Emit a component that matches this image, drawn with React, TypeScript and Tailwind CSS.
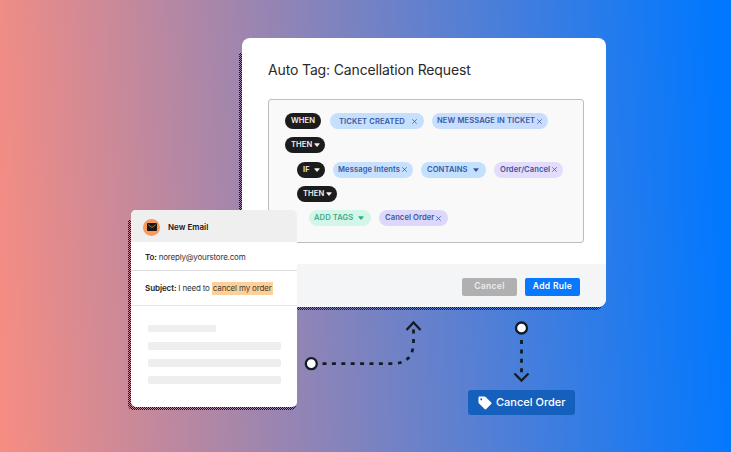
import React from "react";

type PillProps = {
  children: React.ReactNode;
  className: string;
  mark?: "x" | "caret";
  markClass?: string;
};

function Caret({ className = "" }: { className?: string }) {
  return (
    <svg viewBox="0 0 8 5" className={`h-[4px] w-[6px] shrink-0 ${className}`} fill="currentColor">
      <path d="M1 .3h6q.8 0 .4.7L4.6 4.5q-.6.6-1.2 0L.6 1Q.2.3 1 .3Z" />
    </svg>
  );
}

function Cross({ className = "" }: { className?: string }) {
  return (
    <svg viewBox="0 0 5 5" className={`size-[5px] shrink-0 ${className}`} stroke="currentColor" strokeWidth="0.8">
      <path d="M.3.3l4.4 4.4M4.7.3L.3 4.7" />
    </svg>
  );
}

function Pill({ children, className, mark, markClass }: PillProps) {
  return (
    <div className={`flex h-4 shrink-0 items-center rounded-full whitespace-nowrap ${className}`}>
      <span>{children}</span>
      {mark === "x" && <Cross className={markClass} />}
      {mark === "caret" && <Caret className={markClass} />}
    </div>
  );
}

function RuleCard() {
  return (
    <section className="absolute top-[38px] left-[242px] h-[269px] w-[364px]">
      <div className="absolute top-[15px] right-[3px] -bottom-[3px] -left-[3px] rounded-b-lg bg-[repeating-conic-gradient(#16161c_0_25%,transparent_0_50%)] bg-[length:2px_2px]" />
      <div className="relative flex h-full flex-col overflow-hidden rounded-lg bg-white">
        <h1 className="pt-[21px] pl-[26px] text-[14px] leading-[21px] tracking-[-0.14px] text-[#2a2a2a]">Auto Tag: Cancellation Request</h1>
        <div className="mt-[19px] ml-[26px] flex h-[144px] w-[316px] flex-col gap-[8.3px] rounded-[3px] border border-[#bdbdbd] bg-[#f9f9f9] pt-[13px] pl-4 text-[7.6px] leading-4 font-semibold tracking-[0.09px] text-[#3b589f]">
          <div className="flex">
            <Pill className="w-9 bg-[#1c1c1c] pl-[6px] text-[#f2f2f2]">WHEN</Pill>
            <Pill className="ml-[9px] w-[94px] bg-[#c5e0ff] pt-px pl-[9px]" mark="x" markClass="ml-[7px]">TICKET CREATED</Pill>
            <Pill className="ml-2 w-[116px] bg-[#c9deff] pl-[5px]" mark="x" markClass="ml-[2px]">NEW MESSAGE IN TICKET</Pill>
          </div>
          <div className="flex">
            <Pill className="w-10 bg-[#1c1c1c] pl-[6px] text-[#f2f2f2]" mark="caret" markClass="ml-[2px]">THEN</Pill>
          </div>
          <div className="flex pl-3">
            <Pill className="w-7 bg-[#1c1c1c] pl-[6px] text-[#f2f2f2]" mark="caret" markClass="ml-[4px]">IF</Pill>
            <Pill className="ml-2 w-[80px] bg-[#c6e0ff] pl-[5px]" mark="x" markClass="ml-[2px]">Message Intents</Pill>
            <Pill className="ml-2 w-[65px] bg-[#c3e0ff] pl-[6px]" mark="caret" markClass="ml-[5px]">CONTAINS</Pill>
            <Pill className="ml-2 w-[69px] bg-[#e3dcfd] pl-[6px]" mark="x" markClass="ml-[2px]">Order/Cancel</Pill>
          </div>
          <div className="flex pl-3">
            <Pill className="w-10 bg-[#1c1c1c] pl-[6px] text-[#f2f2f2]" mark="caret" markClass="ml-[2px]">THEN</Pill>
          </div>
          <div className="flex pl-6">
            <Pill className="w-[62px] bg-[#d4f6e8] pl-[5px] text-[#45ab88]" mark="caret" markClass="ml-[5px] text-[#1ab883]">ADD TAGS</Pill>
            <Pill className="ml-2 w-[69px] bg-[#ddd8fb] pl-[6px]" mark="x" markClass="ml-[2px]">Cancel Order</Pill>
          </div>
        </div>
        <footer className="mt-auto flex h-[43px] items-center justify-end gap-2 bg-[#f3f5f6] pt-[2px] pr-[26px] text-[8.5px] font-semibold tracking-[0.33px] text-white">
          <button className="h-[18px] w-[55px] rounded-[2px] bg-[#b0b0b0] text-[#ececec]">Cancel</button>
          <button className="h-[18px] w-[55px] rounded-[2px] bg-[#0878ff]">Add Rule</button>
        </footer>
      </div>
    </section>
  );
}

function EmailCard() {
  return (
    <section className="absolute top-[210px] left-[131px] h-[197px] w-[166px]">
      <div className="absolute top-[10px] right-[1px] -bottom-[3px] -left-[3px] rounded-b-[5px] bg-[repeating-conic-gradient(#16161c_0_25%,transparent_0_50%)] bg-[length:2px_2px]" />
      <div className="relative flex h-full flex-col overflow-hidden rounded-[5px] bg-white text-[8px] text-[#333]">
        <header className="flex h-8 shrink-0 items-center bg-[#efefef] pt-[2px] pl-3">
          <span className="flex size-[17px] items-center justify-center rounded-full bg-[#f9995b]">
            <svg viewBox="0 0 10 8" className="h-[8px] w-[10px]">
              <rect width="10" height="8" rx="1" fill="#171717" />
              <path d="M1.3 1.8 5 4.5l3.7-2.7" fill="none" stroke="#f9995b" strokeWidth=".7" />
            </svg>
          </span>
          <h2 className="pl-2 font-semibold text-[#151515]">New Email</h2>
        </header>
        <p className="flex h-[29px] shrink-0 items-center border-b border-[#dedede] pt-[2px] pl-[14px] tracking-[-0.19px] whitespace-pre"><b className="font-semibold tracking-[-0.1px] text-[#222]">To: </b>noreply@yourstore.com</p>
        <p className="flex h-[35px] shrink-0 items-center border-b border-[#e8e8e8] pl-[14px] tracking-[-0.17px] whitespace-pre"><b className="font-semibold tracking-[-0.07px] text-[#222]">Subject: </b>I need to <mark className="h-[13px] w-[61px] bg-[#fdd09a] px-px leading-[13px] text-[#493a2c]">cancel my order</mark></p>
        <div className="flex flex-col gap-[9px] pt-[19px] pl-[17px]">
          <div className="h-[7px] w-[68px] rounded-[2px] bg-[#eee]" />
          <div className="mt-px h-2 w-[133px] rounded-[2px] bg-[#eee]" />
          <div className="h-2 w-[133px] rounded-[2px] bg-[#eee]" />
          <div className="h-2 w-[133px] rounded-[2px] bg-[#eee]" />
        </div>
      </div>
    </section>
  );
}

export default function App() {
  return (
    <main className="relative h-[452px] w-[731px] overflow-hidden bg-[linear-gradient(87deg,#f78d82_0%,#0078ff_98%)] font-['Inter','Liberation_Sans',sans-serif]">
      <RuleCard />
      <EmailCard />
      <svg className="absolute top-[310px] left-[300px]" width="240" height="80" fill="none" stroke="#131c26">
        <path d="M22.5 53.7H92Q113.5 53.7 113.5 32V16" strokeWidth="2.8" strokeDasharray="4 5.4" />
        <path d="m106.5 20 7-7.5 7 7.5" strokeWidth="2.3" />
        <circle cx="11.3" cy="53.7" r="5.5" fill="#fff" strokeWidth="2.3" />
        <path d="M221.5 30v34" strokeWidth="2.8" strokeDasharray="4 5.4" />
        <path d="m214.5 63.5 7 7 7-7" strokeWidth="2.3" />
        <circle cx="221.5" cy="18" r="5.5" fill="#fff" strokeWidth="2.3" />
      </svg>
      <div className="absolute top-[390px] left-[468px] flex h-[25px] w-[107px] items-center rounded-[3px] bg-[#1560bd] pl-[10px] text-[11px] font-medium text-white">
        <svg viewBox="0 0 14 14" className="mr-1 size-[14px]">
          <path fill="#fff" fillRule="evenodd" d="M1.5.5h5q.7 0 1.2.5l5.5 5.5q.8.8 0 1.6l-5 5q-.8.8-1.6 0L1 7.5Q.5 7 .5 6.4V1.5q0-1 1-1Zm1.7 1.7a1 1 0 1 0 .1 0Z" />
        </svg>
        Cancel Order
      </div>
    </main>
  );
}
